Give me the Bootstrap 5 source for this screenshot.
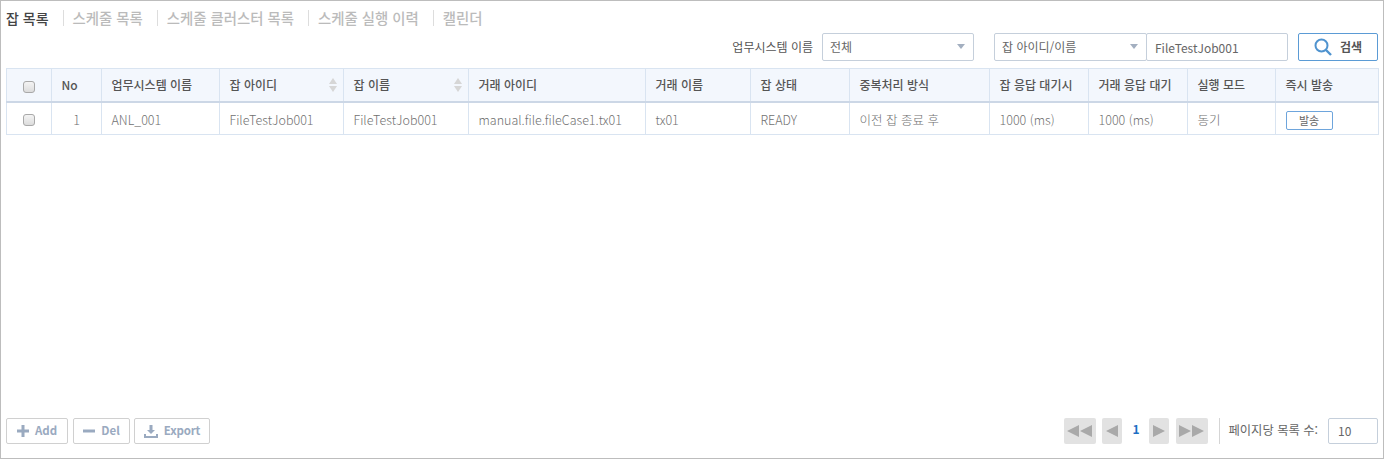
<!DOCTYPE html>
<html lang="ko"><head><meta charset="utf-8"><title>잡 목록</title>
<link rel="stylesheet" href="https://cdn.jsdelivr.net/npm/bootstrap@5.3.0/dist/css/bootstrap.min.css">
<style>
html,body{height:100%;background:#fff}
body{font-family:"Noto Sans CJK KR","Noto Sans",sans-serif;font-size:12px;color:#666;font-weight:300;overflow:hidden}
.frame{height:459px;width:1384px;border:1px solid #bdbdbd;padding:0 5px}
.tabbar{height:32px;padding-top:9px;font-size:14.4px;line-height:16px;font-weight:500;color:#bbb;list-style:none;margin:0;padding-left:0}
.tabbar li+li{margin-left:14px;padding-left:9px;border-left:1px solid #ddd}
.tabbar .on{color:#444;font-size:14px}
.searchbar{height:35px;gap:0}
.lab{margin-right:9px;color:#555;font-size:12px;font-weight:400;line-height:28px}
.sel{height:28px;border:1px solid #c5cfdb;border-radius:2px;padding:0 7px;position:relative;line-height:26px;color:#666;font-weight:400;background:#fff}
.sel::after{content:"";position:absolute;right:8px;top:10px;border:4px solid transparent;border-top:5px solid #a3afc0;border-bottom:0}
.sel1{width:152px;margin-right:20px}.sel2{width:153px}
.inp{width:142px;height:28px;border:1px solid #c5cfdb;border-radius:2px;padding:0 8px;line-height:27px;margin-left:-1px;font-weight:400}
.srch{width:80px;height:28px;margin-left:10px;padding:0;border:1px solid #5b9bd5;border-radius:2px;background:#fff;color:#555;font-size:12px;font-weight:700;line-height:1}
.srch:hover{background:#fff;border-color:#5b9bd5;color:#555}
.grid{table-layout:fixed;width:1372px;margin:0;border-collapse:collapse}
.grid th,.grid td{border:1px solid #d9e4f1;padding:0 9.5px;vertical-align:middle;white-space:nowrap;overflow:hidden;box-shadow:none}
.grid th{height:33px;background:#f3f7fd;color:#555;font-weight:500;font-size:12px;border-bottom:2px solid #ccd7e6}
.grid td{height:33px;color:#707070;font-weight:300;font-size:12.5px;padding-top:4px}
.grid .ck{padding:2px 1px 0 0;text-align:center}
.box{display:inline-block;width:12px;height:12px;border:1px solid #a9a9a9;border-radius:3px;background:linear-gradient(#f4f4f4,#dcdcdc);vertical-align:middle}
.c0{width:45px}.c1{width:50px}.c2{width:118px}.c3{width:124px}.c4{width:125px}.c5{width:177px}.c6{width:105px}.c7{width:99px}.c8{width:140px}.c9{width:99px}.c10{width:99px}.c11{width:88px}.c12{width:103px}
.sortable{position:relative}
.updown{position:absolute;right:5px;top:9px}
.send{width:47px;height:19px;padding:0;border:1px solid #6ea5dc;border-radius:2px;background:#fff;color:#666;font-size:11px;line-height:16px;font-weight:400;display:block}
.send:hover{background:#fff;color:#666;border-color:#6ea5dc}
.spacer{height:283px}
.foot{height:27px}
.act{height:26px;border:1px solid #d0d0d0;border-radius:2px;background:#fff;color:#9aaac0;font-weight:700;font-size:11.5px;padding:0;line-height:1;display:flex;align-items:center;justify-content:center;gap:6px}
.act:hover{background:#fff;color:#9aaac0;border-color:#d0d0d0}
.a1{width:62px;margin-right:5px}.a2{width:57px;margin-right:4px}.a3{width:76px;letter-spacing:-.2px}
.pg{height:26px;background:#e2e2e2;border-radius:2px;display:flex;align-items:center;justify-content:center}
.p1,.p5{width:32px}.p2,.p4{width:20px}
.num{width:27px;text-align:center;color:#1d6fc4;font-weight:700;font-size:12px;line-height:22px}
.p1{margin-right:6px}.p4{margin-right:7px}
.div{width:1px;height:26px;background:#d5d5d5;margin:0 8px 0 11px}
.plab{color:#666;font-weight:400;font-size:12.3px;margin-right:10px;line-height:24px}
.pnum{width:50px;height:26px;border:1px solid #c5cfdb;border-radius:2px;padding:0 9px;line-height:24px;font-weight:400}
</style></head><body>
<div class="frame d-flex flex-column">
<ul class="tabbar d-flex align-items-start"><li class="on">잡 목록</li><li>스케줄 목록</li><li>스케줄 클러스터 목록</li><li>스케줄 실행 이력</li><li>캘린더</li></ul>
<div class="searchbar d-flex justify-content-end align-items-start">
<span class="lab">업무시스템 이름</span><div class="sel sel1">전체</div><div class="sel sel2">잡 아이디/이름</div><div class="inp">FileTestJob001</div>
<button class="btn srch d-flex align-items-center justify-content-center gap-2" type="button"><svg width="18" height="18" viewBox="0 0 18 18" fill="none" stroke="#4f93cf" stroke-width="2"><circle cx="7.5" cy="7.5" r="6"/><path d="M12 12l5 5" stroke-width="2.4"/></svg>검색</button></div>
<table class="table grid"><colgroup><col class="c0"><col class="c1"><col class="c2"><col class="c3"><col class="c4"><col class="c5"><col class="c6"><col class="c7"><col class="c8"><col class="c9"><col class="c10"><col class="c11"><col class="c12"></colgroup>
<thead><tr><th class="ck"><span class="box"></span></th><th>No</th><th>업무시스템 이름</th>
<th class="sortable">잡 아이디<svg class="updown" width="10" height="14" viewBox="0 0 10 14" fill="#d6d6d6"><path d="M5 0l4 6H1zM5 14L1 8h8z"/></svg></th>
<th class="sortable">잡 이름<svg class="updown" width="10" height="14" viewBox="0 0 10 14" fill="#d6d6d6"><path d="M5 0l4 6H1zM5 14L1 8h8z"/></svg></th>
<th>거래 아이디</th><th>거래 이름</th><th>잡 상태</th><th>중복처리 방식</th><th>잡 응답 대기시</th><th>거래 응답 대기</th><th>실행 모드</th><th>즉시 발송</th></tr></thead>
<tbody><tr><td class="ck"><span class="box"></span></td><td class="text-center">1</td><td>ANL_001</td><td>FileTestJob001</td><td>FileTestJob001</td><td>manual.file.fileCase1.tx01</td><td>tx01</td><td>READY</td><td>이전 잡 종료 후</td><td>1000 (ms)</td><td>1000 (ms)</td><td>동기</td><td><button class="btn send" type="button">발송</button></td></tr></tbody></table>
<div class="spacer"></div>
<div class="foot d-flex align-items-start">
<button class="btn act a1" type="button"><svg width="12" height="12" viewBox="0 0 12 12" fill="#9aaac0"><path d="M4.5 0h3v4.5H12v3H7.5V12h-3V7.5H0v-3h4.5z"/></svg>Add</button>
<button class="btn act a2" type="button"><svg width="12" height="12" viewBox="0 0 12 12" fill="#9aaac0"><path d="M0 4.5h12v3H0z"/></svg>Del</button>
<button class="btn act a3" type="button"><svg width="14" height="13" viewBox="0 0 14 13" fill="#9aaac0"><path d="M5.5 0h3v5H11L7 9 3 5h2.5zM0 9h2v2h10V9h2v4H0z"/></svg>Export</button>
<div class="ms-auto d-flex align-items-start">
<div class="pg p1"><svg width="26" height="12" viewBox="0 0 26 12" fill="#a9a9a9"><path d="M0 6l12-6v12zM13 6l12-6v12z"/></svg></div>
<div class="pg p2"><svg width="12" height="12" viewBox="0 0 12 12" fill="#a9a9a9"><path d="M0 6l12-6v12z"/></svg></div>
<div class="num">1</div>
<div class="pg p4"><svg width="12" height="12" viewBox="0 0 12 12" fill="#a9a9a9"><path d="M12 6L0 0v12z"/></svg></div>
<div class="pg p5"><svg width="26" height="12" viewBox="0 0 26 12" fill="#a9a9a9"><path d="M12 6L0 0v12zM25 6L13 0v12z"/></svg></div>
<div class="div"></div><span class="plab">페이지당 목록 수:</span><div class="pnum">10</div></div>
</div></div>
<script src="https://cdn.jsdelivr.net/npm/bootstrap@5.3.0/dist/js/bootstrap.bundle.min.js"></script>
</body></html>
